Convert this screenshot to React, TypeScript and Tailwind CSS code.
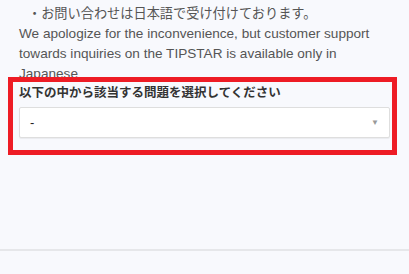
import React from "react";

export default function App() {
  return (
    <div
      className="relative w-[409px] h-[274px] overflow-hidden bg-[#f8f9fd]"
      style={{ fontFamily: '"Liberation Sans", "Noto Sans CJK JP", sans-serif' }}
    >
      <div className="px-[19px] pt-[4px]">
        <p className="pl-[9px] text-[13.2px] leading-[20px] text-[#555]">
          ・お問い合わせは日本語で受け付けております。
        </p>
        <p className="text-[13.6px] leading-[20px] text-[#555]">
          We apologize for the inconvenience, but customer support towards inquiries on the TIPSTAR is available only in Japanese
        </p>
        <div className="text-[12.5px] leading-[18px] font-bold text-[#333]">
          以下の中から該当する問題を選択してください
        </div>
        <div className="mt-[5px] h-[31px] bg-white border border-[#dedede] rounded-[2px] shadow-[0_1px_1px_rgba(0,0,0,0.06)] flex items-center justify-between pl-[10px] pr-[10px]">
          <span className="text-[13px] text-[#222]">-</span>
          <span className="text-[8px] text-[#999]">▼</span>
        </div>
      </div>
      <div className="mt-[111px] border-t-2 border-[#e6e7ea]" />
      <div className="absolute left-[8px] top-[77px] w-[389px] h-[78px] border-[5px] border-[#ee1c25]" />
    </div>
  );
}
